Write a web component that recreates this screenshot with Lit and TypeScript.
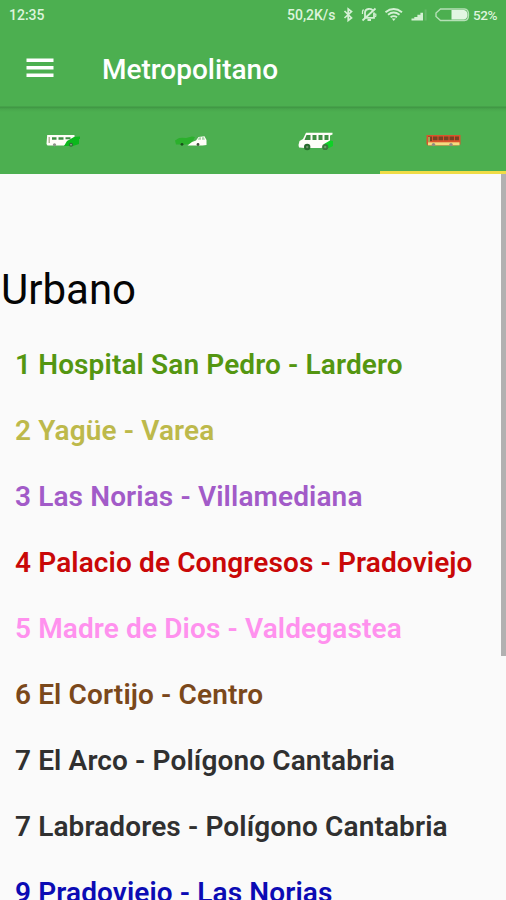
import { LitElement, html, css, svg } from "lit";
import { customElement, state } from "lit/decorators.js";
import { classMap } from "lit/directives/class-map.js";

interface Route {
  name: string;
  color: string;
}

const ROUTES: Route[] = [
  { name: "1 Hospital San Pedro - Lardero", color: "#549611" },
  { name: "2 Yagüe - Varea", color: "#bdb94b" },
  { name: "3 Las Norias - Villamediana", color: "#a25bc8" },
  { name: "4 Palacio de Congresos - Pradoviejo", color: "#c90808" },
  { name: "5 Madre de Dios - Valdegastea", color: "#ff91ee" },
  { name: "6 El Cortijo - Centro", color: "#7a481b" },
  { name: "7 El Arco - Polígono Cantabria", color: "#303030" },
  { name: "7 Labradores - Polígono Cantabria", color: "#303030" },
  { name: "9 Pradoviejo - Las Norias", color: "#0b0bb4" },
];

const coach = svg`
  <path d="M3.200 3 H30.500 V6 L27 9 L24 12 L20 13.500 H3.500 L2.500 12Z" fill="#fffdf8"/>
  <path d="M23 9 L30 5 L36 4.500 V7 H35 V12 L29 14 H20Z" fill="#0cb81c"/>
  <path d="M4.500 5h1.500v6h-1.500z" fill="#b4b89a"/>
  <path d="M8 5.200h4.500v2.600h-4.500zM14.500 5.200h5v2.600h-5zM21.500 5.200h5v2h-5z" fill="#3f8f43"/>
  <circle cx="10.500" cy="12.800" r="1.600" fill="#8d9488"/><circle cx="27" cy="12.700" r="2" fill="#35663a"/>
  <circle cx="27" cy="12.700" r=".8" fill="#a9c7a5"/>`;

const cars = svg`
  <path d="M4 8.500 L8 6 Q11 5.500 15 6 L21 4.500 L24 5 L22 9 L18 12 L14 12.600 H5Z" fill="#2bb02c"/>
  <path d="M16.500 13.500 L21 10 L25 8.500 L27.500 5 L33.500 4.200 L35.500 8 V13 L31.500 13.600Z" fill="#fffdf8"/>
  <path d="M28 5.500 L30 5.200 V7.800 H26.800ZM31 5.200H33l.8 2.600h-2.800z" fill="#a5d4a6"/>
  <circle cx="11" cy="12.300" r="1.400" fill="#194f1a"/><circle cx="27" cy="12.500" r="1.400" fill="#42513d"/>`;

const van = svg`
  <path d="M1.500 13 L2.500 9 L6 7 L9 .8 H35.500 V2.600 L33 3.600 V12 L28 15 L24 16 H8 L2 15.500Z" fill="#fffdf8"/>
  <path d="M27 12 L33 8.500 L36 9 L36 14 L32 16 H26Z" fill="#0fd127"/>
  <path d="M9.500 3h4v5h-6zM15.500 3h4v5h-4zM21.500 3h4v5h-4zM27.500 3h4v5h-4z" fill="#3f8f43"/>
  <circle cx="10.200" cy="15" r="3.200" fill="#286a2c"/><circle cx="10.200" cy="15" r="1.200" fill="#6b8f68"/>
  <circle cx="28.200" cy="15" r="3.100" fill="#397a3b"/><circle cx="28.200" cy="15" r="1.200" fill="#68a067"/>`;

const bus = svg`
  <path d="M2.500 3 H36.500 V12.500 Q34 13.800 31 13.500 H4 L2.500 12Z" fill="#d9542c"/>
  <path d="M4 10.300H35.500V13.300H4Z" fill="#f5dc80"/>
  <path d="M4 4.500h4v4.500H4zM9 4.500h4.500v3.700H9zM14.500 4.500h4.500v3.700h-4.500zM20 4.500h4.500v3.700h-4.500zM25.500 4.500h4.500v3.700h-4.500zM31 4.500h4v3.700H31z" fill="#784323"/>
  <path d="M4 5h2v5H4z" fill="#a0a552"/>
  <circle cx="9.500" cy="12.600" r="1.700" fill="#938b83"/><circle cx="27" cy="12.600" r="1.700" fill="#938b83"/>`;

const TABS = [coach, cars, van, bus];

@customElement("status-bar")
export class StatusBar extends LitElement {
  static styles = css`
    :host {
      display: flex;
      align-items: center;
      box-sizing: border-box;
      height: 30px;
      padding: 0 8px 0 9px;
      color: #dcf4dc;
      font: 500 14px/30px Roboto, sans-serif;
    }
    .time { flex: 1; }
    .icons { display: block; width: 137px; height: 30px; }
    .speed { width: 49px; font-size: 14px; }
    .battery { width: 25px; font-size: 13.500px; letter-spacing: -0.4px; }
  `;

  render() {
    return html`
      <span class="time">12:35</span>
      <span class="speed">50,2K/s</span>
      <svg class="icons" viewBox="336 0 137 30" fill="none" stroke="#d4f0d4">
        <path d="M344.500 11 L351.500 18 L348.200 20.500 V9 L351.500 11.500 L344.500 18" stroke-width="1.700" />
        <g stroke-width="1.800">
          <path d="M365 17.500 V12.500 Q365 9.500 368.500 9 Q371 8.800 372.500 10 M364 17.800 H374 V12.500 M367.500 20 H371 M362.500 20.500 L375.500 8.500" />
          <path d="M362.500 14 Q362 11 363.500 9.500 M375.500 17 Q376.500 15.500 375.500 13.500" stroke-width="1.300" />
        </g>
        <g stroke-width="1.900">
          <path d="M385.500 12.200 Q393.700 5.800 402 12.200" />
          <path d="M388 14.800 Q393.700 10.400 399.500 14.800" />
          <path d="M390.600 17.300 Q393.700 15 397 17.300" />
        </g>
        <path d="M391.800 18.500 H395.700 L393.700 21Z" fill="#d4f0d4" stroke="none" />
        <path d="M411.500 18.500h2.800v2h-2.800zM414.300 17h3.100v3.500h-3.100zM417.400 14.800h3v5.700h-3zM420.400 12.800h2.600v7.700h-2.600z" fill="#d4f0d4" stroke="none" />
        <path d="M424.600 9.500h2v11h-2z" fill="#66b969" stroke="none" />
        <path d="M440.500 9 H464.500 Q468.500 9 468.500 14.800 Q468.500 20.500 464.500 20.500 H440.500 L436 16.500 V13Z" stroke="#b5e0b6" stroke-width="1.400" />
        <path d="M451.500 10 H464 Q467.500 10.500 467.500 14.800 Q467.500 19 464 19.500 H451.500Z" fill="#e2f6e2" stroke="none" />
      </svg>
      <span class="battery">52%</span>
    `;
  }
}

@customElement("app-root")
export class AppRoot extends LitElement {
  @state() private active = 3;

  static styles = css`
    :host {
      display: flex;
      flex-direction: column;
      height: 900px;
      overflow: hidden;
      background: #fafafa;
      font-family: Roboto, sans-serif;
    }
    .header { flex: none; background: #4caf50; }
    .toolbar {
      display: flex;
      align-items: center;
      box-sizing: border-box;
      height: 77px;
      padding-left: 26px;
      border-bottom: 1px solid #46a24a;
      color: #fff;
    }
    .menu {
      display: flex;
      padding: 0;
      border: 0;
      background: none;
    }
    .menu svg { width: 28px; height: 20px; }
    .title {
      margin: 3px 0 0 48px;
      font-size: 28px;
      line-height: 36px;
      font-weight: 500;
    }
    .tabs {
      display: grid;
      grid-template-columns: repeat(4, 1fr);
      height: 67.400px;
      background: linear-gradient(#3f9443 0, #48a64c 2px, #4caf50 5px);
    }
    .tab {
      display: flex;
      align-items: center;
      justify-content: center;
      padding: 6px 0 0;
      border: 0;
      border-bottom: 3px solid transparent;
      background: none;
    }
    .tab.active { border-bottom-color: #f0dc46; }
    .tab svg { width: 38px; height: 20px; }
    .page { display: flex; flex: 1; min-height: 0; }
    .content { flex: 1; min-width: 0; overflow: hidden; }
    .thumb { width: 5px; height: 482px; background: #b1b1b1; }
    .heading {
      margin: 91px 0 0 1px;
      font-size: 42px;
      line-height: 50px;
      font-weight: 400;
      color: #050505;
    }
    .routes { margin: 17px 0 0; padding: 0 0 0 15px; list-style: none; }
    .route {
      height: 66px;
      font-size: 28px;
      line-height: 66px;
      font-weight: 600;
      letter-spacing: 0.12px;
      white-space: nowrap;
    }
  `;

  render() {
    return html`
      <header class="header">
        <status-bar></status-bar>
        <div class="toolbar">
          <button class="menu" aria-label="Menu">
            <svg viewBox="0 0 28 20"><path d="M.5 .5h27v3.600h-27zM.5 8h27v3.600h-27zM.5 15.500h27v3.600h-27z" fill="#fff" /></svg>
          </button>
          <h1 class="title">Metropolitano</h1>
        </div>
        <nav class="tabs">
          ${TABS.map(
            (icon, i) => html`
              <button class=${classMap({ tab: true, active: i === this.active })} @click=${() => (this.active = i)}>
                <svg viewBox="0 0 38 20">${icon}</svg>
              </button>
            `
          )}
        </nav>
      </header>
      <main class="page">
        <div class="content">
          <h2 class="heading">Urbano</h2>
          <ul class="routes">
            ${ROUTES.map((r) => html`<li class="route" style="color:${r.color}">${r.name}</li>`)}
          </ul>
        </div>
        <div class="thumb"></div>
      </main>
    `;
  }
}
